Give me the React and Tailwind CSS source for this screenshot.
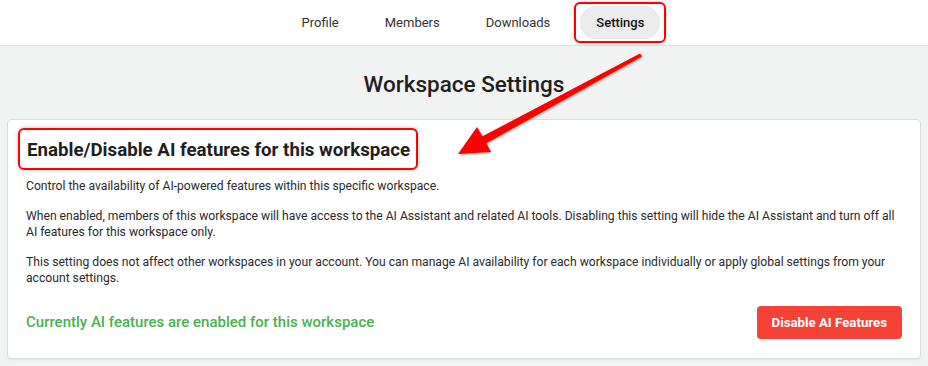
import React from 'react'

const tabs = ['Profile', 'Members', 'Downloads', 'Settings']

const App = () => {
    return (
        <div className="relative min-h-[366px] w-full bg-[#f1f2f2] text-[#222] font-['Roboto',sans-serif]">
            {/* top tabs */}
            <div className="flex h-[46px] items-center justify-center gap-[14px] border-b border-[#e0e0e0] bg-white pl-[18px]">
                {tabs.map((t) => (
                    t === 'Settings' ? (
                        <div key={t} className="relative">
                            <span className="block rounded-full bg-[#ececee] px-4 py-[7px] text-[13px] font-medium text-[#111] shadow-[inset_0_0_2px_rgba(0,0,0,0.08)]">
                                {t}
                            </span>
                            <span className="pointer-events-none absolute -inset-x-[6px] -inset-y-[4px] rounded-[6px] border-2 border-[#f00] shadow-[0_0_3px_rgba(0,0,0,0.25)]"></span>
                        </div>
                    ) : (
                        <span key={t} className="px-4 py-[7px] text-[13px] text-[#333]">{t}</span>
                    )
                ))}
            </div>

            <h1 className="pt-[22px] pb-[19px] text-center text-[22.5px] font-medium leading-[32px] text-[#1f1f1f]">
                Workspace Settings
            </h1>

            {/* card */}
            <div className="mx-[7px] rounded-[4px] border border-[#dcdcdc] bg-white pl-[18px] pr-[17px] pt-[11px] pb-[19px] shadow-[0_1px_2px_rgba(0,0,0,0.06)]">
                <div className="relative inline-block">
                    <h2 className="px-[1px] text-[18.7px] font-bold leading-[38px] text-[#1e1e1e]">
                        Enable/Disable AI features for this workspace
                    </h2>
                    <span className="pointer-events-none absolute -left-[8px] -right-[7px] -top-[3px] -bottom-[1px] rounded-[6px] border-2 border-[#f00] shadow-[0_0_4px_rgba(0,0,0,0.25)]"></span>
                </div>
                <div className="mt-[9px] space-y-[14px] text-[12.15px] leading-[16px] text-[#2a2a2a]">
                    <p>Control the availability of AI-powered features within this specific workspace.</p>
                    <p>When enabled, members of this workspace will have access to the AI Assistant and related AI tools. Disabling this setting will hide the AI Assistant and turn off all AI features for this workspace only.</p>
                    <p>This setting does not affect other workspaces in your account. You can manage AI availability for each workspace individually or apply global settings from your account settings.</p>
                </div>
                <div className="mt-[20px] flex items-center justify-between">
                    <span className="text-[15px] font-medium text-[#4caf50]">Currently AI features are enabled for this workspace</span>
                    <button className="mr-[1px] h-[33px] rounded-[4px] bg-[#f44336] px-[15px] text-[13.25px] font-bold text-white">
                        Disable AI Features
                    </button>
                </div>
            </div>

            {/* annotation arrow */}
            <svg className="pointer-events-none absolute left-0 top-0" width="928" height="366" viewBox="0 0 928 366">
                <polygon
                    points="640,53.5 482.5,136.3 477,127 458,154 491,152 486.3,143.3 642,56.5"
                    fill="#ff0000"
                    style={{ filter: 'drop-shadow(1px 1px 1px rgba(0,0,0,0.3))' }}
                />
            </svg>
        </div>
    )
}

export default App
